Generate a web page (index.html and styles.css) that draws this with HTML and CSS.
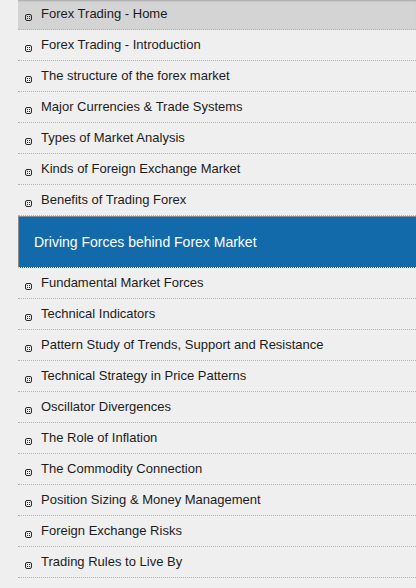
FILE: index.html
```html
<!DOCTYPE html>
<html lang="en">
<head>
    <meta charset="UTF-8">
    <meta name="viewport" content="width=device-width, initial-scale=1.0">
    <title>Forex Trading</title>
    <link rel="stylesheet" href="styles.css">
</head>
<body>
    <ul class="nav">
        <li class="nav-item active"><svg class="bullet" viewBox="0 0 7 7"><rect x="0.5" y="0.5" width="6" height="6" rx="1.5"/><path d="M2 2h1v1H2zM4 2h1v1H4zM2 4h1v1H2zM4 4h1v1H4z"/></svg>Forex Trading - Home</li>
        <li class="nav-item"><svg class="bullet" viewBox="0 0 7 7"><rect x="0.5" y="0.5" width="6" height="6" rx="1.5"/><path d="M2 2h1v1H2zM4 2h1v1H4zM2 4h1v1H2zM4 4h1v1H4z"/></svg>Forex Trading - Introduction</li>
        <li class="nav-item"><svg class="bullet" viewBox="0 0 7 7"><rect x="0.5" y="0.5" width="6" height="6" rx="1.5"/><path d="M2 2h1v1H2zM4 2h1v1H4zM2 4h1v1H2zM4 4h1v1H4z"/></svg>The structure of the forex market</li>
        <li class="nav-item"><svg class="bullet" viewBox="0 0 7 7"><rect x="0.5" y="0.5" width="6" height="6" rx="1.5"/><path d="M2 2h1v1H2zM4 2h1v1H4zM2 4h1v1H2zM4 4h1v1H4z"/></svg>Major Currencies &amp; Trade Systems</li>
        <li class="nav-item"><svg class="bullet" viewBox="0 0 7 7"><rect x="0.5" y="0.5" width="6" height="6" rx="1.5"/><path d="M2 2h1v1H2zM4 2h1v1H4zM2 4h1v1H2zM4 4h1v1H4z"/></svg>Types of Market Analysis</li>
        <li class="nav-item"><svg class="bullet" viewBox="0 0 7 7"><rect x="0.5" y="0.5" width="6" height="6" rx="1.5"/><path d="M2 2h1v1H2zM4 2h1v1H4zM2 4h1v1H2zM4 4h1v1H4z"/></svg>Kinds of Foreign Exchange Market</li>
        <li class="nav-item"><svg class="bullet" viewBox="0 0 7 7"><rect x="0.5" y="0.5" width="6" height="6" rx="1.5"/><path d="M2 2h1v1H2zM4 2h1v1H4zM2 4h1v1H2zM4 4h1v1H4z"/></svg>Benefits of Trading Forex</li>
        <li class="nav-heading">Driving Forces behind Forex Market</li>
        <li class="nav-item"><svg class="bullet" viewBox="0 0 7 7"><rect x="0.5" y="0.5" width="6" height="6" rx="1.5"/><path d="M2 2h1v1H2zM4 2h1v1H4zM2 4h1v1H2zM4 4h1v1H4z"/></svg>Fundamental Market Forces</li>
        <li class="nav-item"><svg class="bullet" viewBox="0 0 7 7"><rect x="0.5" y="0.5" width="6" height="6" rx="1.5"/><path d="M2 2h1v1H2zM4 2h1v1H4zM2 4h1v1H2zM4 4h1v1H4z"/></svg>Technical Indicators</li>
        <li class="nav-item"><svg class="bullet" viewBox="0 0 7 7"><rect x="0.5" y="0.5" width="6" height="6" rx="1.5"/><path d="M2 2h1v1H2zM4 2h1v1H4zM2 4h1v1H2zM4 4h1v1H4z"/></svg>Pattern Study of Trends, Support and Resistance</li>
        <li class="nav-item"><svg class="bullet" viewBox="0 0 7 7"><rect x="0.5" y="0.5" width="6" height="6" rx="1.5"/><path d="M2 2h1v1H2zM4 2h1v1H4zM2 4h1v1H2zM4 4h1v1H4z"/></svg>Technical Strategy in Price Patterns</li>
        <li class="nav-item"><svg class="bullet" viewBox="0 0 7 7"><rect x="0.5" y="0.5" width="6" height="6" rx="1.5"/><path d="M2 2h1v1H2zM4 2h1v1H4zM2 4h1v1H2zM4 4h1v1H4z"/></svg>Oscillator Divergences</li>
        <li class="nav-item"><svg class="bullet" viewBox="0 0 7 7"><rect x="0.5" y="0.5" width="6" height="6" rx="1.5"/><path d="M2 2h1v1H2zM4 2h1v1H4zM2 4h1v1H2zM4 4h1v1H4z"/></svg>The Role of Inflation</li>
        <li class="nav-item"><svg class="bullet" viewBox="0 0 7 7"><rect x="0.5" y="0.5" width="6" height="6" rx="1.5"/><path d="M2 2h1v1H2zM4 2h1v1H4zM2 4h1v1H2zM4 4h1v1H4z"/></svg>The Commodity Connection</li>
        <li class="nav-item"><svg class="bullet" viewBox="0 0 7 7"><rect x="0.5" y="0.5" width="6" height="6" rx="1.5"/><path d="M2 2h1v1H2zM4 2h1v1H4zM2 4h1v1H2zM4 4h1v1H4z"/></svg>Position Sizing &amp; Money Management</li>
        <li class="nav-item"><svg class="bullet" viewBox="0 0 7 7"><rect x="0.5" y="0.5" width="6" height="6" rx="1.5"/><path d="M2 2h1v1H2zM4 2h1v1H4zM2 4h1v1H2zM4 4h1v1H4z"/></svg>Foreign Exchange Risks</li>
        <li class="nav-item"><svg class="bullet" viewBox="0 0 7 7"><rect x="0.5" y="0.5" width="6" height="6" rx="1.5"/><path d="M2 2h1v1H2zM4 2h1v1H4zM2 4h1v1H2zM4 4h1v1H4z"/></svg>Trading Rules to Live By</li>
    </ul>
</body>
</html>
```

FILE: styles.css
```css
body {
    margin: 0;
    background-color: #efefef;
    font-family: "Liberation Sans", Arial, sans-serif;
    overflow: hidden;
}
.nav {
    list-style: none;
    margin: -1px 0 0 18px;
    padding: 0;
}
.nav-item {
    display: flex;
    align-items: center;
    height: 28px;
    padding: 0 0 2px 7px;
    border-bottom: 1px dotted #b4b4b4;
    font-size: 13px;
    color: #1c1c1c;
}
.nav-item.active {
    background-color: #d4d4d4;
    box-shadow: inset 0 3px 2px -1px #a6a6a6;
}
.bullet {
    width: 7px;
    height: 7px;
    margin: 8px 9px 0 0;
    flex-shrink: 0;
}
.bullet rect {
    fill: none;
    stroke: #2a2a2a;
}
.bullet path {
    fill: #2a2a2a;
}
.nav-heading {
    display: flex;
    align-items: center;
    height: 50px;
    padding-left: 15px;
    background-color: #136aaa;
    border-top: 1px solid #8a8a8a;
    border-left: 1px solid #8a8a8a;
    border-bottom: 1px dotted #ffffff;
    color: #ffffff;
    font-size: 14px;
}
```
